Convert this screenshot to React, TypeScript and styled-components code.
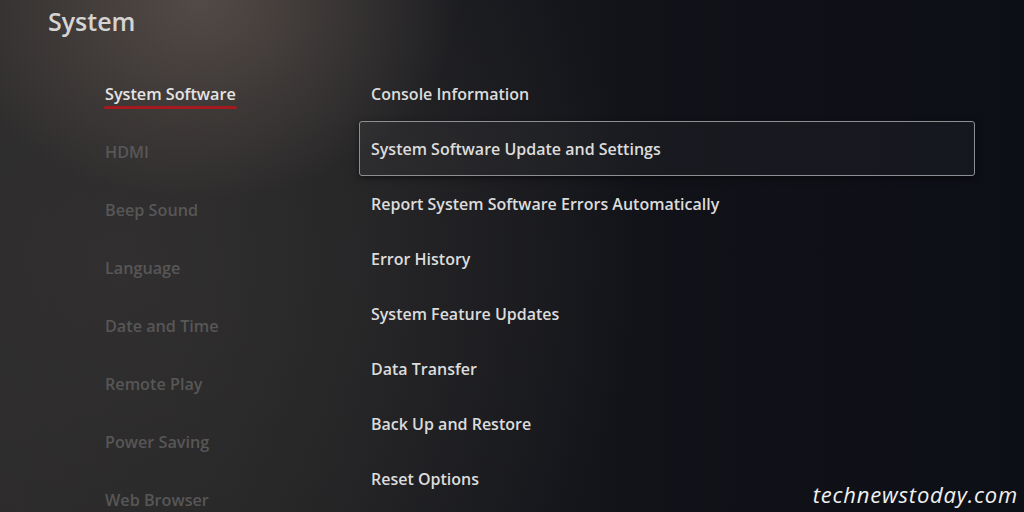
import styled, { createGlobalStyle } from 'styled-components';

const GlobalStyle = createGlobalStyle`
  html, body {
    margin: 0;
    padding: 0;
    background: #14151a;
  }
  * {
    box-sizing: border-box;
  }
`;

const sideItems = [
  'System Software',
  'HDMI',
  'Beep Sound',
  'Language',
  'Date and Time',
  'Remote Play',
  'Power Saving',
  'Web Browser',
];

const mainItems = [
  'Console Information',
  'System Software Update and Settings',
  'Report System Software Errors Automatically',
  'Error History',
  'System Feature Updates',
  'Data Transfer',
  'Back Up and Restore',
  'Reset Options',
];

export default function App() {
  return (
    <>
      <GlobalStyle />
      <StyledScreen>
        <StyledTitle>System</StyledTitle>
        <StyledBody>
          <StyledSideNav>
            {sideItems.map((item, idx) => (
              <StyledSideItem key={`side-${idx}`}>
                <StyledSideLabel $active={idx === 0}>{item}</StyledSideLabel>
              </StyledSideItem>
            ))}
          </StyledSideNav>
          <StyledMenuList>
            {mainItems.map((item, idx) => (
              <StyledMenuRow key={`menu-${idx}`} $focused={idx === 1}>
                {item}
              </StyledMenuRow>
            ))}
          </StyledMenuList>
        </StyledBody>
        <StyledWatermark>technewstoday.com</StyledWatermark>
      </StyledScreen>
    </>
  );
}

const StyledScreen = styled.div`
  position: relative;
  width: 1024px;
  height: 512px;
  overflow: hidden;
  font-family: 'Open Sans', 'Noto Sans', sans-serif;
  background:
    radial-gradient(ellipse 260px 200px at 200px 0px, rgba(110, 96, 90, 0.6), rgba(110, 96, 90, 0) 100%),
    radial-gradient(ellipse 520px 520px at 120px 260px, rgba(50, 48, 48, 0.9), rgba(50, 48, 48, 0) 100%),
    linear-gradient(90deg, #2a2929 0%, #242424 22%, #1a1b1f 40%, #111218 65%, #0d0f16 100%);
`;

const StyledTitle = styled.h1`
  margin: 0;
  height: 65px;
  padding: 4px 0 0 48px;
  font-size: 25px;
  font-weight: 600;
  color: #d6d4d3;
`;

const StyledBody = styled.div`
  display: flex;
  align-items: flex-start;
  padding-left: 105px;
`;

const StyledSideNav = styled.div`
  display: flex;
  flex-direction: column;
  width: 254px;
  flex-shrink: 0;
`;

const StyledSideItem = styled.div`
  height: 58px;
  display: flex;
  align-items: center;
`;

const StyledSideLabel = styled.span<{ $active: boolean }>`
  position: relative;
  font-size: 16.2px;
  font-weight: 600;
  color: ${({ $active }) => ($active ? '#e6e4e3' : '#575757')};

  ${({ $active }) =>
    $active &&
    `
    &::after {
      content: '';
      position: absolute;
      left: -1px;
      right: -1px;
      bottom: -4px;
      height: 3px;
      border-radius: 2px;
      background: #a51a1e;
    }
  `}
`;

const StyledMenuList = styled.div`
  display: flex;
  flex-direction: column;
  width: 616px;
  margin-top: 1px;
`;

const StyledMenuRow = styled.div<{ $focused: boolean }>`
  height: 55px;
  display: flex;
  align-items: center;
  padding-left: 11px;
  font-size: 16px;
  font-weight: 600;
  color: #dcdcdc;
  border-radius: 3px;
  border: 1.5px solid ${({ $focused }) => ($focused ? '#8e8f92' : 'transparent')};
  background: ${({ $focused }) => ($focused ? 'rgba(255, 255, 255, 0.035)' : 'transparent')};
  box-shadow: ${({ $focused }) => ($focused ? '0 2px 6px rgba(0, 0, 0, 0.5)' : 'none')};
`;

const StyledWatermark = styled.div`
  position: absolute;
  right: 6px;
  bottom: 3px;
  font-family: 'Open Sans', sans-serif;
  font-style: italic;
  font-weight: 400;
  font-size: 22px;
  letter-spacing: 0.8px;
  color: #f0f0f0;
`;
